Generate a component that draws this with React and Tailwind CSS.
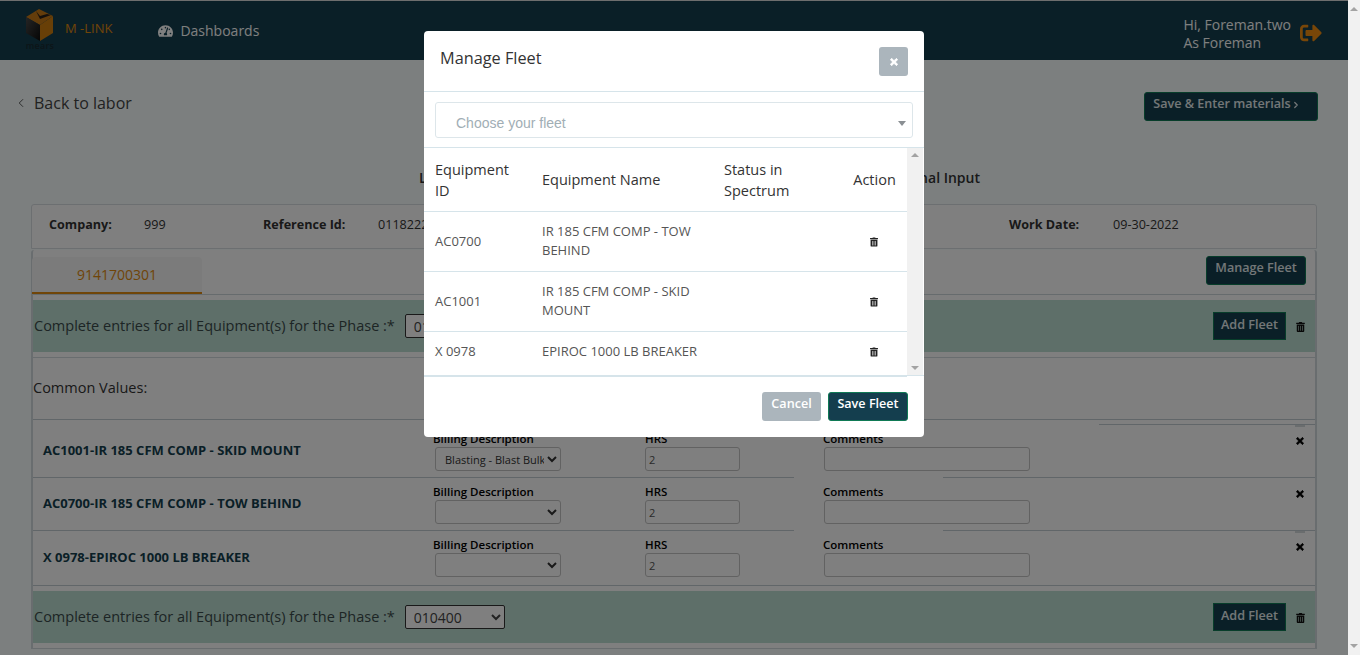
import React from "react";
import { FaTachometerAlt, FaSignOutAlt, FaTrashAlt, FaTimes } from "react-icons/fa";
import { ChevronLeft, ChevronRight } from "lucide-react";

const sans = "font-['Open_Sans',sans-serif]";

function Logo() {
  return (
    <div className="relative w-[30px] h-[46px] flex flex-col items-center">
      <svg width="30" height="34" viewBox="0 0 30 34" className="shrink-0">
        <defs>
          <linearGradient id="lf" x1="0" y1="0" x2="1" y2="1">
            <stop offset="0" stopColor="#4a4a4a" />
            <stop offset="1" stopColor="#0c0c0c" />
          </linearGradient>
        </defs>
        <path d="M1 9 L14 1 L28 8 L15 17 Z" fill="#c97a16" />
        <path d="M11 3 L15 11 L26 7 L22 6 L15 8 Z" fill="#2a2118" />
        <path d="M1 9 L15 17 L15 33 L1 25 Z" fill="url(#lf)" />
        <path d="M15 17 L28 8 L28 25 L15 33 Z" fill="#d07f0f" />
      </svg>
      <span className={`${sans} text-[9px] leading-[10px] font-semibold text-[#1a2a30] tracking-wide -mt-px`}>mears</span>
    </div>
  );
}

function DarkBtn({ children, className = "" }) {
  return (
    <button className={`bg-[#143e4e] border border-[#0f7a55] rounded-[3px] text-[#e6eef0] text-[12.6px] font-semibold flex items-center justify-center ${className}`}>
      {children}
    </button>
  );
}

function PhaseStripe({ mt, value }) {
  return (
    <div className={`h-[52px] bg-[#bcdfd3] flex items-center pl-px pr-[10px] ${mt}`}>
      <span className="text-[14.5px] text-[#3a4a4a] whitespace-nowrap">Complete entries for all Equipment(s) for the Phase :*</span>
      <select defaultValue={value} className="ml-[10px] w-[100px] h-[24px] bg-white border border-[#333] rounded-[2px] text-sm text-[#444] pl-1">
        <option>{value}</option>
      </select>
      <div className="flex-1" />
      <DarkBtn className="w-[73px] h-[28px] rounded-none text-xs pb-[2px]">Add Fleet</DarkBtn>
      <FaTrashAlt className="ml-[10px] mt-[2px] w-[9px] h-[10px] text-[#111]" />
    </div>
  );
}

function Divider() {
  return (
    <div className="flex h-px">
      <div className="w-[761px] bg-[#c3cdd2]" />
      <div className="w-[149px]" />
      <div className="flex-1 bg-[#c3cdd2]" />
    </div>
  );
}

function FleetRow({ name, billing, h = "h-[52px]", stub = false }) {
  return (
    <div className={`relative flex ${h}`}>
      {stub && <div className="absolute right-[10px] top-0 w-[10px] h-[2px] bg-[#d4dadd]" />}
      <div className="w-[400px] pl-[10px] flex items-center text-[13px] font-bold text-[#143e4e] whitespace-nowrap">{name}</div>
      <div className="w-[212px] pt-[6px]">
        <div className="text-[11.5px] leading-[15px] mb-px font-semibold text-black">Billing Description</div>
        <select defaultValue={billing} className="block ml-[2px] w-[126px] h-[24px] bg-white border border-[#c4c4c4] rounded-[3px] text-[11px] text-[#333] pl-[5px]">
          <option>{billing}</option>
        </select>
      </div>
      <div className="w-[178px] pt-[6px]">
        <div className="text-[11.5px] leading-[15px] mb-px font-semibold text-black">HRS</div>
        <input readOnly value="2" className="block w-[95px] h-[24px] bg-white border border-[#c4c4c4] rounded-[3px] text-[11px] text-[#555] pl-[3px]" />
      </div>
      <div className="flex-1 pt-[6px]">
        <div className="text-[11.5px] leading-[15px] mb-px font-semibold text-black">Comments</div>
        <input readOnly className="block ml-px w-[206px] h-[24px] bg-white border border-[#c4c4c4] rounded-[3px]" />
      </div>
      <FaTimes stroke="currentColor" strokeWidth={40} className="absolute right-[11px] top-[11px] w-[8px] h-[10px] text-black" />
    </div>
  );
}

function TableRow({ id, name, h, pb = "" }) {
  return (
    <tr className={`border-b border-[#d6e4ea] ${h}`}>
      <td className={`pl-[11px] pt-[2px] text-[13px] text-[#555] align-middle ${pb}`}>{id}</td>
      <td className={`pl-[11px] pr-2 text-[13px] leading-[19px] text-[#555] align-middle ${pb}`}>{name}</td>
      <td />
      <td className={`align-middle pt-[2px] ${pb}`}>
        <FaTrashAlt className="mx-auto -translate-x-px w-[8px] h-[10px] text-[#222]" />
      </td>
    </tr>
  );
}

function Modal() {
  return (
    <div className="w-[500px] h-[406px] bg-white rounded-[4px] flex flex-col overflow-hidden">
      <div className="h-[61px] flex items-start justify-between pl-4 pr-[16px] border-b border-[#d6e4ea] shrink-0">
        <div className="mt-[15px] text-[16.3px] leading-[24px] font-medium text-[#333]">Manage Fleet</div>
        <button className="mt-4 w-[29px] h-[29px] bg-[#abb5bc] rounded-[3px] flex items-center justify-center">
          <FaTimes stroke="currentColor" strokeWidth={50} className="w-[10px] h-[10px] text-white" />
        </button>
      </div>
      <div className="px-[11px] pt-[10px] h-[56px] border-b border-[#d6e4ea] shrink-0">
        <div className="relative h-[36px] border border-[#dde6ea] rounded-[3px] pl-5 flex items-center pt-[6px] font-['Liberation_Sans',sans-serif] text-sm text-[#a1aeb5]">
          Choose your fleet
          <span className="absolute right-[6px] top-[18px] w-0 h-0 border-x-[4px] border-x-transparent border-t-[5px] border-t-[#8a8f93]" />
        </div>
      </div>
      <div className="flex h-[228px] border-b border-[#d6e4ea] shrink-0">
        <table className="w-[483px] table-fixed border-collapse h-[228px]">
          <colgroup>
            <col className="w-[107px]" />
            <col className="w-[182px]" />
            <col className="w-[129px]" />
            <col className="w-[65px]" />
          </colgroup>
          <thead>
            <tr className="border-b border-[#d6e4ea] h-[63px] text-[#333] text-[14.5px] leading-[21px] font-medium text-left">
              <th className="pl-[11px] pr-[16px] pt-[2px] font-medium">Equipment ID</th>
              <th className="pl-[11px] font-medium">Equipment Name</th>
              <th className="pl-[11px] pt-[2px] font-medium">Status in Spectrum</th>
              <th className="text-center font-medium">Action</th>
            </tr>
          </thead>
          <tbody>
            <TableRow id="AC0700" name="IR 185 CFM COMP - TOW BEHIND" h="h-[60px]" />
            <TableRow id="AC1001" name="IR 185 CFM COMP - SKID MOUNT" h="h-[60px]" />
            <TableRow id="X 0978" name="EPIROC 1000 LB BREAKER" h="h-[45px]" pb="pb-[5px]" />
          </tbody>
        </table>
        <div className="w-[16px] bg-[#f1f1f1] flex flex-col items-center justify-between py-[5px]">
          <span className="w-0 h-0 border-x-[4px] border-x-transparent border-b-[4px] border-b-[#a3a3a3]" />
          <span className="w-0 h-0 border-x-[4px] border-x-transparent border-t-[4px] border-t-[#a3a3a3]" />
        </div>
      </div>
      <div className="flex-1 flex items-start justify-end gap-[7px] pt-[16px] pr-[16px]">
        <button className="w-[59px] h-[29px] bg-[#abb5bc] rounded-[3px] text-white text-[12.6px] font-semibold pb-1">Cancel</button>
        <button className="w-[80px] h-[29px] bg-[#143e4e] border border-[#0f7a55] rounded-[3px] text-white text-[12.6px] font-semibold pb-1">Save Fleet</button>
      </div>
    </div>
  );
}

export default function App() {
  return (
    <div className={`${sans} flex h-[655px] w-full overflow-hidden bg-[#f1f1f1]`}>
      <div className="relative flex-1 h-full overflow-hidden bg-[#f8ffff]">
        <header className="h-[60px] bg-[#143e4e] border-t border-[#dddddd] flex items-center pl-[25px] pr-[26px]">
          <div className="mt-[1px]"><Logo /></div>
          <span className="ml-[10px] mb-[4px] text-[13px] text-[#e08a10] whitespace-nowrap">M -LINK</span>
          <FaTachometerAlt className="ml-[46px] w-[15px] h-[14px] text-white" />
          <span className="ml-[7px] text-sm text-white">Dashboards</span>
          <div className="flex-1" />
          <div className="text-sm leading-[18px] text-white mt-[6px]">
            <div>Hi, Foreman.two</div>
            <div>As Foreman</div>
          </div>
          <FaSignOutAlt className="ml-[9px] mt-[5px] w-[22px] h-[22px] text-[#f08c10]" />
        </header>

        <div className="flex items-start justify-between pt-[32px] pl-[14px] pr-[30px]">
          <div className="flex items-center text-base leading-[24px] text-[#444] -mt-px">
            <ChevronLeft className="w-[14px] h-[14px]" strokeWidth={1.5} />
            <span className="ml-[6px]">Back to labor</span>
          </div>
          <DarkBtn className="w-[174px] h-[29px] pb-1 pr-2">
            Save &amp; Enter materials
            <ChevronRight className="w-[10px] h-[10px]" strokeWidth={3} />
          </DarkBtn>
        </div>

        <div className="flex justify-between mt-[47px] ml-[419px] mr-[368px] text-sm leading-[20px] font-semibold text-[#333]">
          <span>Labor</span>
          <span>Additional Input</span>
        </div>

        <div className="mx-[31px] mt-4 w-[1286px]">
          <div className="h-[45px] bg-white border border-[#d9dfe2] rounded-t-[3px] flex items-center pl-[17px] pb-[2px] text-[12.6px] text-[#333]">
            <span className="w-[95px] font-bold">Company:</span>
            <span className="w-[119px]">999</span>
            <span className="w-[115px] font-bold">Reference Id:</span>
            <span className="w-[631px]">01182227</span>
            <span className="w-[104px] font-bold">Work Date:</span>
            <span>09-30-2022</span>
          </div>

          <div className="bg-white border-l-2 border-r-2 border-[#d2dadf] mt-px rounded-t-[3px]">
            <div className="h-[45px] flex items-start border-b border-[#ccd6da] pr-[9px]">
              <div className="-ml-px mt-[7px] w-[170px] h-[37px] bg-[#f6f6f6] rounded-t-[4px] border-b-2 border-[#e08a10] flex items-center justify-center text-sm text-[#e08a10]">
                9141700301
              </div>
              <div className="flex-1" />
              <DarkBtn className="mt-[6px] w-[100px] h-[29px] pb-1">Manage Fleet</DarkBtn>
            </div>

            <PhaseStripe mt="mt-[5px]" value="010100" />
            <div className="h-px mt-[5px] bg-[#d2dadf]" />
            <div className="h-[61px] flex items-center pb-px text-[14.5px] font-medium text-[#333]">Common Values:</div>
            <div className="h-px bg-[#c3cdd2]" />
            <div className="flex h-px mt-1">
              <div className="w-[1066px]" />
              <div className="flex-1 bg-[#c3cdd2]" />
            </div>
            <FleetRow name="AC1001-IR 185 CFM COMP - SKID MOUNT" billing="Blasting - Blast Bulk" stub />
            <Divider />
            <FleetRow name="AC0700-IR 185 CFM COMP - TOW BEHIND" billing="" />
            <Divider />
            <FleetRow name="X 0978-EPIROC 1000 LB BREAKER" billing="" h="h-[54px]" stub />
            <div className="h-px bg-[#c3cdd2]" />
            <PhaseStripe mt="mt-[5px]" value="010400" />
            <div className="h-px mt-[5px] bg-[#d2dadf]" />
          </div>
        </div>

        <div className="absolute inset-0 bg-black/50 flex justify-center items-start pt-[31px]">
          <Modal />
        </div>
      </div>

      <div className="w-3 h-full bg-[#f1f1f1] flex flex-col items-center justify-between py-[7px]">
        <span className="w-0 h-0 border-x-[4px] border-x-transparent border-b-[4px] border-b-[#a3a3a3]" />
        <span className="w-0 h-0 border-x-[4px] border-x-transparent border-t-[4px] border-t-[#a3a3a3]" />
      </div>
    </div>
  );
}
